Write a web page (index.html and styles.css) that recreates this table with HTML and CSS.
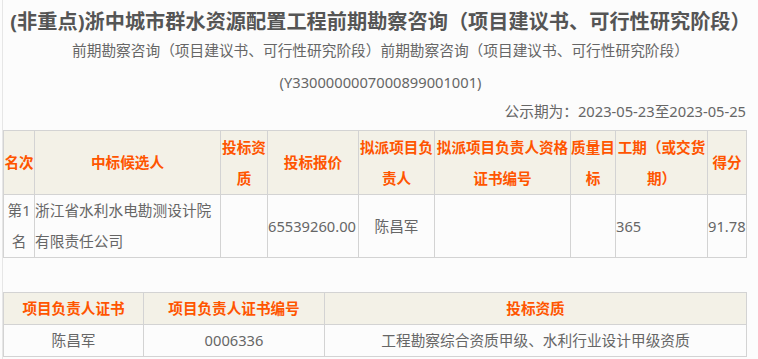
FILE: index.html
```html
<!DOCTYPE html>
<html lang="zh-CN">
<head>
<meta charset="utf-8">
<title>中标候选人公示</title>
<link rel="stylesheet" href="styles.css">
</head>
<body>
<div class="wrap">
  <h1 class="title">(非重点)浙中城市群水资源配置工程前期勘察咨询（项目建议书、可行性研究阶段）</h1>
  <p class="sub">前期勘察咨询（项目建议书、可行性研究阶段）前期勘察咨询（项目建议书、可行性研究阶段）</p>
  <p class="sub">(Y3300000007000899001001)</p>
  <p class="date">公示期为：2023-05-23至2023-05-25</p>

  <table class="grid grid-main">
    <thead>
      <tr>
        <th class="c1">名次</th>
        <th class="c2">中标候选人</th>
        <th class="c3">投标资质</th>
        <th class="c4">投标报价</th>
        <th class="c5">拟派项目负责人</th>
        <th class="c6">拟派项目负责人资格证书编号</th>
        <th class="c7">质量目标</th>
        <th class="c8">工期（或交货期）</th>
        <th class="c9">得分</th>
      </tr>
    </thead>
    <tbody>
      <tr>
        <td class="center">第1名</td>
        <td>浙江省水利水电勘测设计院有限责任公司</td>
        <td></td>
        <td>65539260.00</td>
        <td class="center">陈昌军</td>
        <td></td>
        <td></td>
        <td>365</td>
        <td>91.78</td>
      </tr>
    </tbody>
  </table>

  <table class="grid grid-cert">
    <thead>
      <tr>
        <th class="d1">项目负责人证书</th>
        <th class="d2">项目负责人证书编号</th>
        <th class="d3">投标资质</th>
      </tr>
    </thead>
    <tbody>
      <tr>
        <td class="center">陈昌军</td>
        <td class="center">0006336</td>
        <td class="center">工程勘察综合资质甲级、水利行业设计甲级资质</td>
      </tr>
    </tbody>
  </table>
</div>
</body>
</html>
```

FILE: styles.css
```css
html, body {
  margin: 0;
  padding: 0;
  background: #fcfcfc;
}

body {
  font-family: "Noto Sans", "Noto Sans CJK SC", sans-serif;
  color: #666;
}

.wrap {
  margin-left: 2px;
  border-left: 1px solid #e6e6e6;
  padding-top: 8px;
  min-height: 351px;
}

.title {
  margin: 0;
  font-size: 20.2px;
  line-height: 26px;
  font-weight: bold;
  color: #555;
  text-align: center;
  white-space: nowrap;
}

.sub {
  margin: 0;
  font-size: 14.7px;
  line-height: 32px;
  text-align: center;
  color: #666;
  white-space: nowrap;
}

.date {
  margin: 0 0 6px;
  padding-right: 12px;
  font-size: 14.7px;
  line-height: 26px;
  text-align: right;
  color: #666;
}

.grid {
  border-collapse: separate;
  border-spacing: 0;
  table-layout: fixed;
  width: 744px;
  border-left: 1px solid #d3d3d3;
  border-top: 1px solid #d3d3d3;
}

.grid th,
.grid td {
  box-sizing: border-box;
  border-right: 1px solid #d3d3d3;
  border-bottom: 1px solid #d3d3d3;
  padding: 0;
  font-size: 14.6px;
  line-height: 31px;
  vertical-align: middle;
  overflow: hidden;
}

.grid th {
  background: #f3f1e7;
  color: #ff5500;
  font-weight: bold;
  text-align: center;
}

.grid td {
  color: #666;
  font-size: 14.7px;
  text-align: left;
}

.grid td.center {
  text-align: center;
}

.grid-main th {
  height: 64px;
}

.grid-main td {
  height: 63px;
}

.c1 { width: 31px; }
.c2 { width: 186px; }
.c3 { width: 47px; }
.c4 { width: 91px; }
.c5 { width: 76px; }
.c6 { width: 136px; }
.c7 { width: 45px; }
.c8 { width: 92px; }
.c9 { width: 39px; }

.grid-cert {
  margin-top: 34px;
}

.grid-cert th,
.grid-cert td {
  height: 32px;
}

.d1 { width: 140px; }
.d2 { width: 181px; }
.d3 { width: 422px; }
```
